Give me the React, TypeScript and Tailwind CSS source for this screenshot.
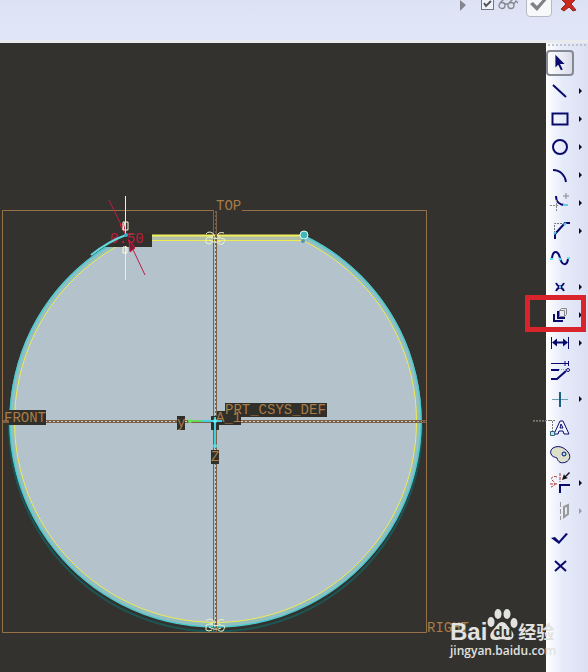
import React from "react";

const NAVY = "#0a0a6e";

type Tool = { name: string; arrow?: "dark" | "grey"; marked?: boolean; active?: boolean; icon: React.ReactNode };

const tools: Tool[] = [
  { name: "Select", active: true, icon: <path d="M9 5v14l3-3 3 6 2-1-3-6h5z" fill={NAVY} stroke="none" /> },
  { name: "Line", arrow: "dark", icon: <path d="M7 8l13 12" /> },
  { name: "Rectangle", arrow: "dark", icon: <path d="M6.500 8.500h15v11h-15z" /> },
  { name: "Circle", arrow: "dark", icon: <circle cx="14" cy="14" r="7" /> },
  { name: "Arc", arrow: "dark", icon: <path d="M7 9c7 0 12 5 13 12" /> },
  {
    name: "Fillet",
    arrow: "dark",
    icon: (
      <>
        <path d="M10 7c0 6 4 9 9 9" />
        <path d="M17 16h5" stroke="#62cde8" />
        <path d="M20 4v6M17 7h6" stroke="#888" strokeWidth="1" />
        <path d="M4 16.500h9M10.500 11v12" stroke="#888" strokeDasharray="2 1" strokeWidth="1" />
      </>
    ),
  },
  {
    name: "Chamfer",
    arrow: "dark",
    icon: (
      <>
        <path d="M9 22v-5L19 6h5" />
        <path d="M8.500 16V6.500H18" stroke="#777" strokeDasharray="2 1" strokeWidth="1" />
        <path d="M8 17l2-2M18 8l2-2" stroke="#62cde8" />
      </>
    ),
  },
  {
    name: "Spline",
    icon: (
      <>
        <path d="M6 13c1-8 6-8 8 0s7 8 8 1" />
        <path d="M4 14h3M13 13l2 2M21 13h3" stroke="#62e0f0" />
      </>
    ),
  },
  {
    name: "Point",
    arrow: "dark",
    icon: (
      <>
        <path d="M10 10c2 5 6 3 8 8M18 10c-2 5-6 3-8 8" />
        <path d="M13 14h2" stroke="#62cde8" />
      </>
    ),
  },
  {
    name: "Use edge",
    arrow: "dark",
    marked: true,
    icon: (
      <>
        <path d="M12 10v7h7" />
        <path d="M8 13v7h9" />
        <path d="M13.500 9.500l2-2h5v6l-2 2M13.500 9.500h5v6h-5z" stroke="#888" strokeWidth="1" />
      </>
    ),
  },
  {
    name: "Dimension",
    arrow: "dark",
    icon: (
      <>
        <path d="M5.500 8v12M22.500 8v12" strokeWidth="1" />
        <path d="M8 13.500h12" />
        <path d="M6 13.500l5-4v8zM22 13.500l-5-4v8z" fill={NAVY} stroke="none" />
      </>
    ),
  },
  {
    name: "Modify",
    icon: (
      <>
        <path d="M5 6.500h17M22.500 4v5M19 4v5" strokeWidth="1" />
        <path d="M5 13h8M5 22h6l9-8" />
        <path d="M13 12.500h7" stroke="#999" strokeDasharray="1 1" strokeWidth="1" />
        <circle cx="22" cy="13" r="1.500" fill="white" strokeWidth="1" />
      </>
    ),
  },
  {
    name: "Constraint",
    arrow: "dark",
    icon: (
      <>
        <path d="M6 14.500h16" stroke="#6aa0b5" strokeWidth="1" />
        <path d="M14 7v15" stroke="#1c5f80" />
      </>
    ),
  },
  {
    name: "Text",
    icon: (
      <>
        <path d="M8 21l6-13h3l6 13h-5l-1-3h-4l-1 3zM14 15h3l-2-4z" fill="#eef4ff" strokeWidth="1" />
        <path d="M4 7.500h6M6.500 8v13M4 7.500h-18" stroke="#777" strokeDasharray="2 1" strokeWidth="1" />
        <path d="M4.500 18.500h4v4h-4z" fill="#bde8f2" stroke="#367" strokeWidth="1" />
      </>
    ),
  },
  {
    name: "Palette",
    icon: (
      <>
        <path d="M7 7c5-3 11-1 15 4 3 4 2 8-2 10-5 2-8 0-9-4-2-1-5-1-6-4-1-2 0-5 2-6z" fill="#dcdfc9" strokeWidth="1" />
        <circle cx="18" cy="13" r="2" fill="#a6e7f5" strokeWidth="1" />
      </>
    ),
  },
  {
    name: "Trim",
    arrow: "dark",
    icon: (
      <>
        <path d="M14 24v-8h10" />
        <path d="M11 8c-5-2-7 2-4 4s2 5-2 6M4 15h8M14 4v9" stroke="#a33832" strokeDasharray="3 1" strokeWidth="1" />
        <path d="M16 11l2-6 1 2 4-4 1 1-4 4 2 1z" fill="#111" stroke="none" />
      </>
    ),
  },
  {
    name: "Mirror",
    arrow: "grey",
    icon: (
      <>
        <path d="M14.500 5v18" stroke="#999" strokeDasharray="5 2" strokeWidth="1" />
        <path d="M18 10l4-2v9l-4 3z" stroke="#999" />
      </>
    ),
  },
  { name: "Done", icon: <path d="M5 13l4-1 4 4 7-8 2 1-9 10z" fill={NAVY} stroke="none" /> },
  { name: "Quit", icon: <path d="M9 8l11 10M20 8L9 18" /> },
];

function Toolbar() {
  return (
    <aside className="relative w-[42px] shrink-0 bg-linear-to-r from-white via-[#e6ebfa] via-40% to-[#dbdff2]">
      <div className="mx-0.5 h-1.5 pt-px">
        <div className="border-t-2 border-dotted border-[#bfc3cb]" />
      </div>
      <ul>
        {tools.map((t) => (
          <li key={t.name} className="relative">
            <button type="button" aria-label={t.name} className="flex h-7 w-full items-center justify-between">
              <span className={t.active ? "rounded-sm border-2 border-[#858995] bg-linear-to-r from-white to-[#d9dcea]" : ""}>
                <svg
                  viewBox={t.active ? "2 2 24 24" : "0 0 28 28"}
                  className={t.active ? "h-[22px] w-6 overflow-visible" : "size-7 overflow-visible"}
                  fill="none"
                  stroke={NAVY}
                  strokeWidth="2"
                >
                  {t.icon}
                </svg>
              </span>
              {t.arrow && (
                <svg viewBox="0 0 8 8" className="mr-1 h-2 w-2">
                  <path d="M3 1l3 3-3 3z" fill={t.arrow === "dark" ? "#0b0b20" : "#999ca5"} />
                </svg>
              )}
            </button>
            {t.marked && (
              <span className="pointer-events-none absolute -top-1.5 -left-[21px] h-[37px] w-[61px] border-[5px] border-[#d9242b]" />
            )}
          </li>
        ))}
      </ul>
    </aside>
  );
}

function Header() {
  return (
    <header className="flex h-[43px] items-start justify-end overflow-hidden border-b-3 border-[#e8ecee] bg-linear-to-b from-[#dce1f4] to-[#e2e7f8] pr-[11px]">
      <button type="button" aria-label="Resume" className="mr-[14px]">
        <svg viewBox="0 0 8 12" className="h-3 w-2">
          <path d="M1 0l6 5-6 6z" fill="#85868d" />
        </svg>
      </button>
      <label className="flex items-start">
        <span className="relative -mt-[3px] mr-1 block size-[13px]">
          <input
            type="checkbox"
            defaultChecked
            aria-label="Preview"
            className="block size-[13px] appearance-none border border-[#74777f] bg-[#f0f3fc]"
          />
          <svg viewBox="0 0 13 13" className="pointer-events-none absolute inset-0 size-[13px]" fill="none" stroke="#555" strokeWidth="2">
            <path d="M3 6l2 3 5-5" />
          </svg>
        </span>
        <svg viewBox="0 0 20 12" className="mr-2 h-3 w-5" fill="none" stroke="#85878d" strokeWidth="1.300">
          <circle cx="4" cy="5.500" r="3" />
          <circle cx="13" cy="5.500" r="3" />
          <path d="M7 4h3M2 3l4-4M11 3l4-4M16 4l2-3 2 2" />
        </svg>
      </label>
      <button type="button" aria-label="Accept" className="-mt-2 mr-2 rounded-sm border border-[#b7bac3] bg-[#f7f8fa]">
        <svg viewBox="0 0 24 23" className="h-[23px] w-6" fill="#808185">
          <path d="M3 11l3-2 4 4 9-10 3 1-12 14z" />
        </svg>
      </button>
      <button type="button" aria-label="Cancel">
        <svg viewBox="0 0 17 12" className="h-3 w-[17px]" fill="#c92720" stroke="#8f2922" strokeWidth="1">
          <path d="M3-3L1-1l5 5-5 5 3 2 5-4 4 4 3-1-5-6 5-5z" />
        </svg>
      </button>
    </header>
  );
}

const labelClass = "font-['Liberation_Mono',monospace] text-[14px]";

function Sketch() {
  return (
    <svg viewBox="0 43 546 629" className="block h-[629px] w-[546px]" fill="none" role="img" aria-label="Sketch">
      <path d="M9 425A206.500 206.500 0 0 0 422 425" stroke="#1d5554" strokeWidth="2" />
      <path d="M127 235H304A206 206 0 1 1 127 235z" fill="#93bfc3" />
      <path d="M127 236H304V241H127z" fill="#b1bea7" />
      <path d="M125 242L129 240.500H303A201 201 0 1 1 125 242z" fill="#b4c2cc" stroke="#f0ec50" />
      <path d="M304 236A205.500 205.500 0 1 1 127 236" stroke="#49cbd0" strokeWidth="1.500" />
      <path d="M127 235.500H304" stroke="#f1ee5e" strokeWidth="2" />
      <path d="M2.500 210.500H214M242 210.500H426.500V632.500H2.500V210.500" stroke="#967047" />

      <g>
        <path d="M215.500 241V620M15 421.500H416" stroke="#d4cdc5" />
        <path d="M215.500 211V632M3 421.500H426" stroke="#776049" strokeDasharray="2 2" />
        <path d="M213.500 210V632M216.500 211V632" stroke="#7d6048" />
        <path d="M3 420.500H426M3 422.500H426" stroke="#7d6048" />
        <path d="M533 421.500H546" stroke="#686450" strokeDasharray="2 1" />
      </g>

      <g fill="#302f2a">
        <path d="M9 410H46V425H9z" />
        <path d="M225 403H327V417H225z" />
        <path d="M217 411H241V425H217z" />
        <path d="M177 416H185V430H177z" />
        <path d="M211 416H219V430H211z" />
        <path d="M211 450H219V464H211z" />
        <path d="M105 247L124 235L152 233V247z" />
      </g>

      <g className={labelClass} fill="#a97b47">
        <text x="216" y="210">TOP</text>
        <text x="4" y="422">FRONT</text>
        <text x="225" y="414">PRT_CSYS_DEF</text>
        <text x="216" y="422">A_1</text>
        <text x="177" y="427">y</text>
        <text x="211" y="461">Z</text>
        <text x="427" y="632">RIGHT</text>
      </g>

      <path d="M190 421H215" stroke="#67d85b" strokeWidth="2" />
      <path d="M202 421H222M215 417V447" stroke="#42d2df" strokeWidth="2" />
      <circle cx="190" cy="421" r="2" fill="#67e95b" />
      <circle cx="215" cy="421" r="2" fill="#6ae9fa" />
      <circle cx="215" cy="446" r="2" fill="#55dfe6" />

      <text x="110" y="243" className={labelClass} fill="#c01a3e">0.50</text>
      <path d="M109 200L126 235M128 239L145 275" stroke="#c01a48" />
      <path d="M120 225l6 10-2-11zM135 248l-6-8 1 12z" stroke="#d51b43" fill="#7c1932" />
      <path d="M125.500 196V234M125.500 246V280" stroke="#f1eed6" />
      <path d="M123 222h5v8h-5zM125 222l-2 8M123 247h4v6h-4z" stroke="#fff8dc" />
      <path d="M91 255Q109 241 126 235" stroke="#65d7dc" strokeWidth="2" />
      <circle cx="126" cy="235" r="2" fill="#36afc1" />

      {[238, 625].map((y) => (
        <g key={y} transform={`translate(215 ${y})`} stroke="#ecf3c3" strokeWidth="1">
          <path d="M-9-4q1-2 4-2q4 1 4 3t-4 2t-4 2t0 4q3 2 6 0M9-5q-2-1-5 0q-3 2 0 4t5 2t-1 5q-3 1-5-1M-5-1q5 3 10 1M-6 2q6 4 12 1" />
        </g>
      ))}

      <circle cx="304" cy="235" r="4" fill="#42b6b9" stroke="#d8fff5" />
      <circle cx="303" cy="241" r="2" fill="#5596ae" />
    </svg>
  );
}

function Watermark() {
  return (
    <div className="absolute right-[34px] bottom-[12px] flex w-[104px] flex-col font-['Open_Sans','Noto_Sans_CJK_SC',sans-serif] text-[#e2e2e0]">
      <div className="flex h-[34px] items-end">
        <span className="font-['Liberation_Sans',sans-serif] text-[24px] leading-5 font-bold">Bai</span>
        <span className="relative block h-[34px] w-[31px] shrink-0">
          <svg viewBox="0 0 31 34" className="h-[34px] w-[31px]" fill="#e2e2e0">
            <ellipse cx="4" cy="14" rx="3.500" ry="5" />
            <ellipse cx="11" cy="6" rx="3.500" ry="5" />
            <ellipse cx="20" cy="6" rx="3.500" ry="5" />
            <ellipse cx="27" cy="15" rx="3.500" ry="5" />
            <path d="M15 14c4 0 5 4 9 8 5 5 2 11-4 10-4-1-6-1-10 0-7 1-9-5-4-10 4-4 5-8 9-8z" />
          </svg>
          <span className="absolute inset-x-0 bottom-[3px] text-center text-[15px] leading-4 font-bold text-[#33332e]">du</span>
        </span>
        <span className="text-[18px] leading-5 font-bold whitespace-nowrap">经验</span>
      </div>
      <span className="text-[12px] leading-[18px] font-semibold whitespace-nowrap">jingyan.baidu.com</span>
    </div>
  );
}

export default function App() {
  return (
    <div className="relative min-h-screen bg-[#33322e]">
      <Header />
      <main className="flex">
        <section className="min-w-0 flex-1 overflow-hidden bg-[#33322e]">
          <Sketch />
        </section>
        <Toolbar />
      </main>
      <Watermark />
    </div>
  );
}
